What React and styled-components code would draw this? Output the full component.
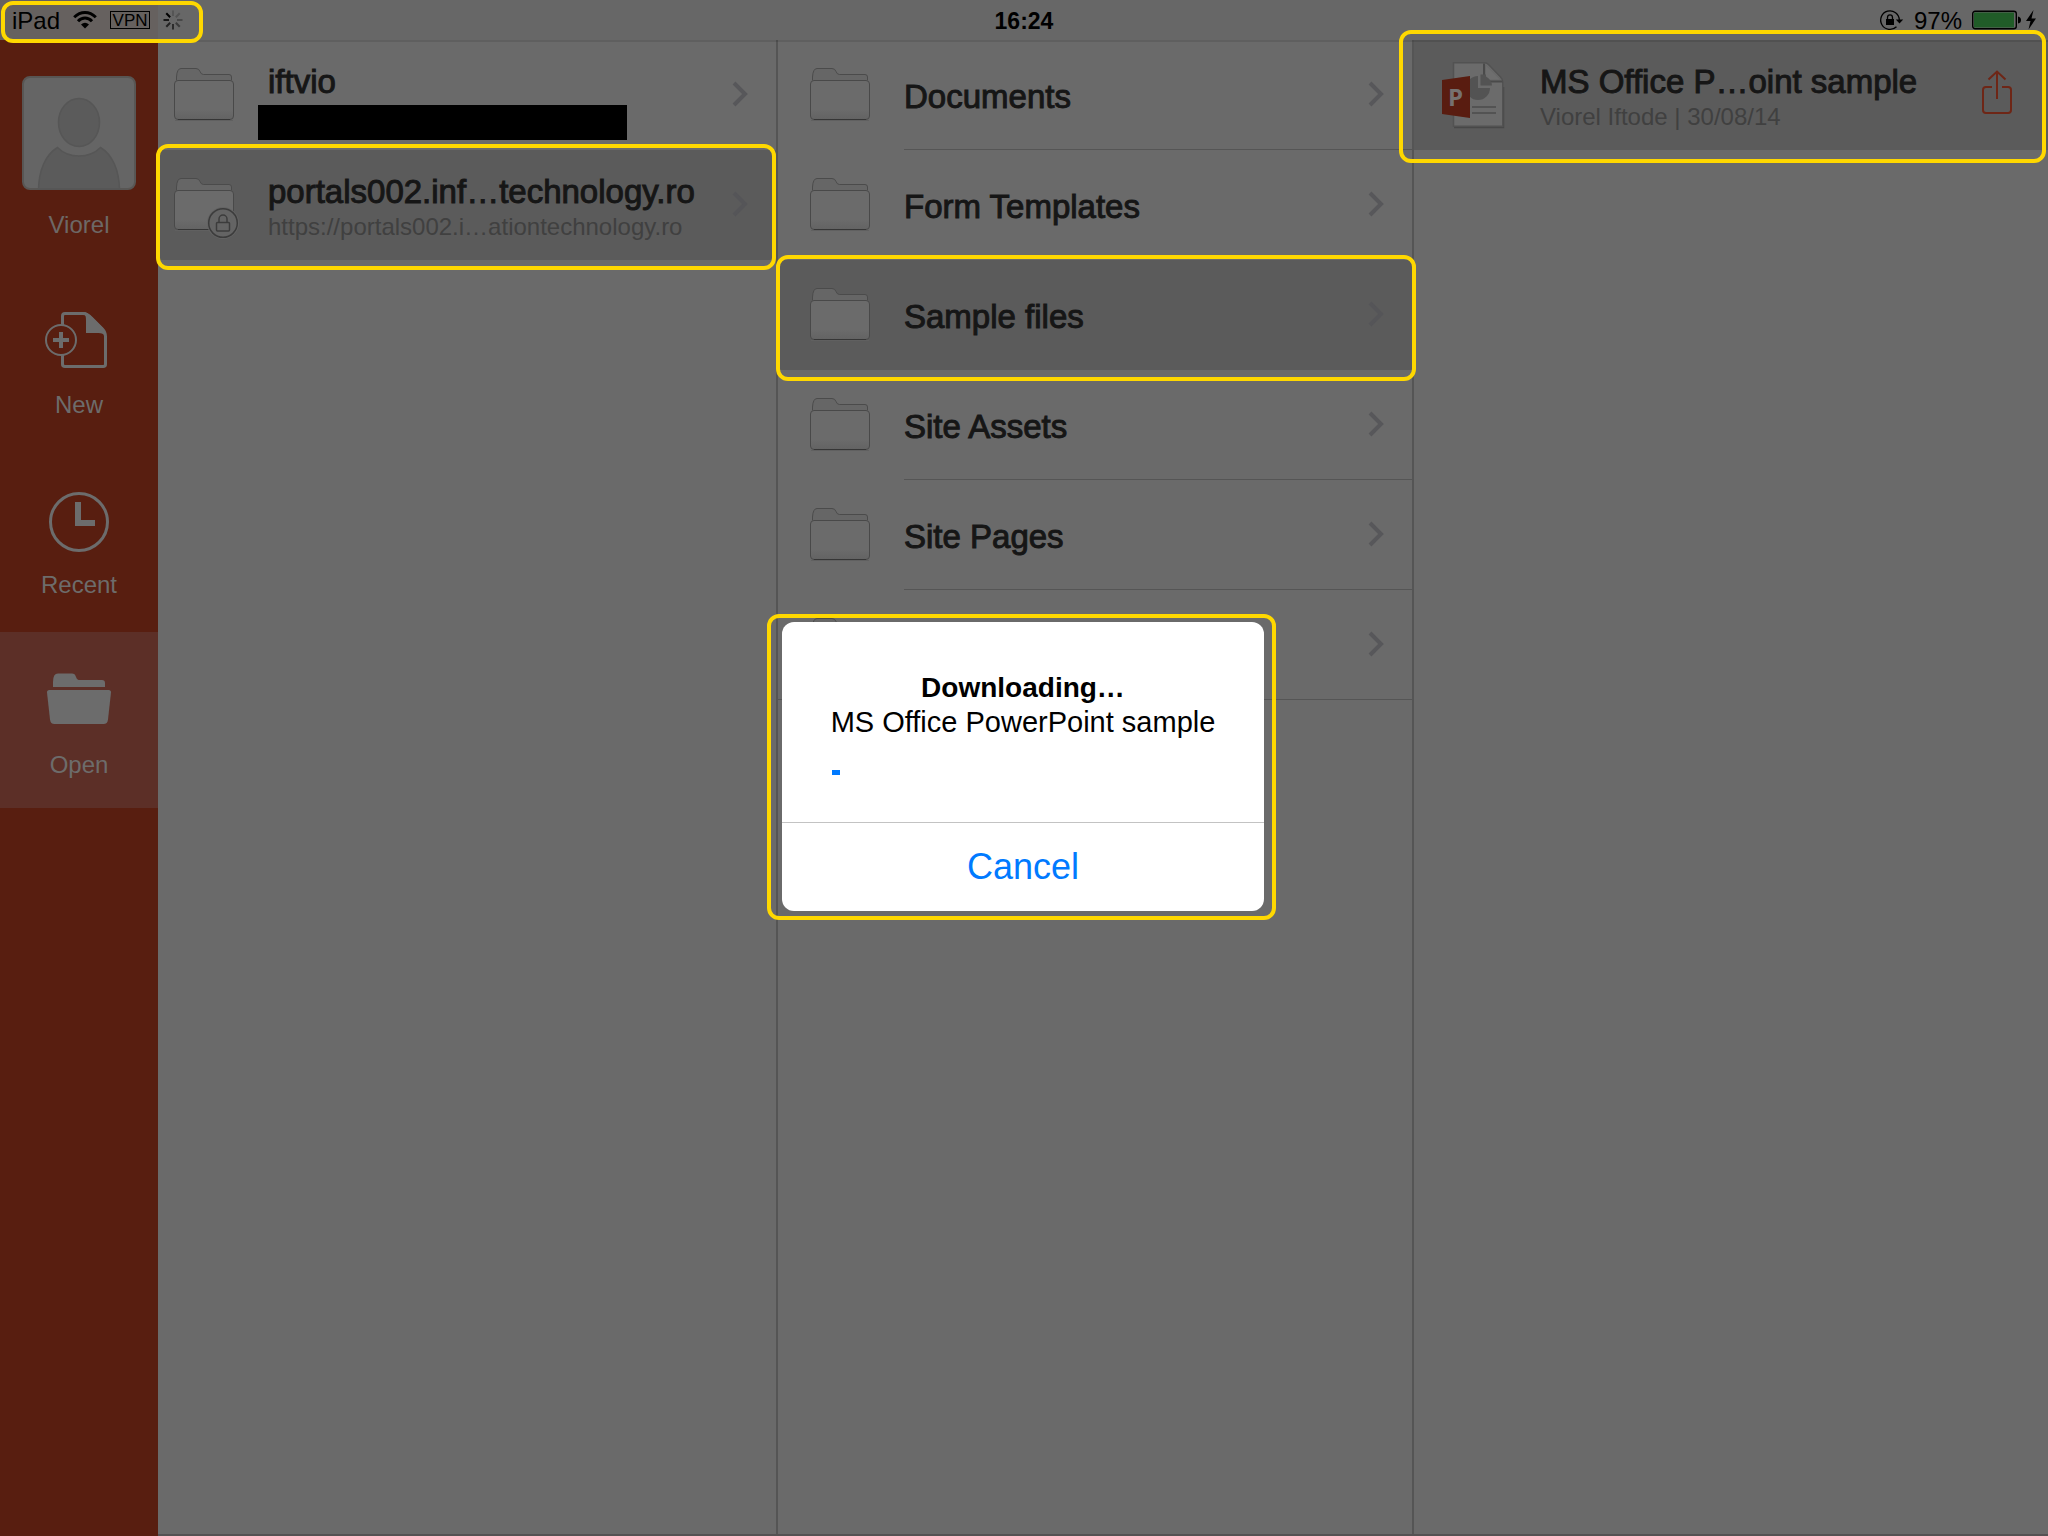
import React from 'react';
import styled, { createGlobalStyle } from 'styled-components';

const GlobalStyle = createGlobalStyle`
  * {
    box-sizing: border-box;
  }

  body {
    margin: 0;
    background: #6a6a6a;
    font-family: "Liberation Sans", Arial, sans-serif;
  }

  button {
    border: 0;
    padding: 0;
    background: none;
    font-family: inherit;
    text-align: left;
    cursor: pointer;
  }

  svg {
    display: block;
    flex: none;
    overflow: visible;
  }
`;

const Page = styled.div`
  display: flex;
  flex-direction: column;
  min-height: 100vh;
`;

/* status bar */

const StatusBar = styled.header`
  position: relative;
  display: grid;
  grid-template-columns: 1fr auto 1fr;
  align-items: center;
  height: 40px;
  padding: 0 12px;
  background: linear-gradient(90deg, #66615f 158px, #676767 158px);
  color: #000;
  font-size: 24px;
  line-height: 28px;
`;

const StatusGroup = styled.div`
  display: flex;
  align-items: center;
  justify-content: ${props => props.$end ? 'flex-end' : 'flex-start'};
  gap: ${props => props.$end ? 10 : 13}px;
`;

const StatusText = styled.span`
  padding-top: 2px;
`;

const Clock = styled.time`
  padding-top: 2px;
  font-size: 23px;
  font-weight: bold;
`;

const Vpn = styled.span`
  width: 40px;
  height: 18px;
  border: 1px solid #000;
  font-size: 17px;
  line-height: 17px;
  text-align: center;
`;

/* yellow frame drawn around the important parts, inset is top right bottom left */
const Highlight = styled.span`
  position: absolute;
  inset: ${props => props.$inset};
  border: 4px solid #ffd800;
  border-radius: 12px;
  pointer-events: none;
  z-index: 3;
`;

/* sidebar */

const Main = styled.div`
  flex: 1;
  display: flex;
`;

const Sidebar = styled.aside`
  flex: none;
  width: 158px;
  padding-top: 36px;
  background: #581e10;
  color: #6d6866;
  font-size: 24px;
  line-height: 28px;
`;

const Profile = styled.div`
  display: flex;
  flex-direction: column;
  align-items: center;
  gap: 21px;
  padding-bottom: 33px;
`;

const Nav = styled.nav`
  display: flex;
  flex-direction: column;
  gap: 4px;
`;

const NavItem = styled.button`
  display: flex;
  flex-direction: column;
  align-items: center;
  gap: 19px;
  height: 176px;
  padding-top: 40px;
  background: ${props => props.$active ? '#5c2f27' : 'transparent'};
  color: #6d6c6b;
  font-size: 24px;
  line-height: 28px;
`;

/* columns */

const Browser = styled.main`
  position: relative;
  flex: 1;
  display: flex;
  border-bottom: 2px solid #555253;

  &::before {
    content: "";
    position: absolute;
    inset: 0 0 auto;
    height: 2px;
    background: rgba(0, 0, 0, 0.1);
    z-index: 1;
  }
`;

const Column = styled.ul`
  flex: ${props => props.$grow} 1 0;
  min-width: 0;
  margin: 0;
  padding: 0;
  list-style: none;

  & + & {
    border-left: 2px solid #555;
  }
`;

const Row = styled.li`
  position: relative;
  display: flex;
  align-items: stretch;
  height: 110px;
  padding-left: ${props => props.$indent}px;
  background: ${props => props.$selected ? '#5b5b5b' : 'transparent'};
  border-bottom: ${props => props.$last ? '1px solid #555' : '0'};
`;

const RowButton = styled.button`
  flex: 1;
  display: flex;
  align-items: center;
  gap: 34px;
  min-width: 0;
`;

const RowBody = styled.span`
  flex: 1;
  display: flex;
  align-items: center;
  align-self: stretch;
  min-width: 0;
  padding-right: ${props => props.$flush ? 0 : 28}px;
  border-bottom: ${props => props.$line ? '1px solid #555' : '0'};
`;

const RowText = styled.span`
  flex: 1;
  display: flex;
  flex-direction: column;
  gap: 2px;
  padding-top: 4px;
`;

/* the stroke gives a medium weight, between regular and bold */
const Title = styled.span`
  min-height: 38px;
  color: #161616;
  font-size: 33px;
  line-height: 38px;
  white-space: nowrap;
  -webkit-text-stroke: 1px #161616;
`;

const Subtitle = styled.span`
  position: relative;
  height: 28px;
  color: #404040;
  font-size: 24px;
  line-height: 28px;
  white-space: nowrap;
`;

const Redacted = styled.span`
  position: absolute;
  top: 2px;
  left: -10px;
  width: 369px;
  height: 35px;
  background: #000;
`;

const ShareButton = styled.button`
  padding: 0 36px;
`;

/* alert */

const Overlay = styled.div`
  position: fixed;
  inset: 0;
  display: flex;
  align-items: center;
  justify-content: center;
  padding: 0 2px 4px 0;
  z-index: 5;
`;

const Alert = styled.div`
  position: relative;
  width: 482px;
  border-radius: 12px;
  background: #fff;
  color: #000;
  line-height: 34px;
`;

const AlertBody = styled.div`
  height: 200px;
  padding: 49px 50px 0;
  text-align: center;
  white-space: nowrap;
`;

const AlertTitle = styled.h2`
  margin: 0;
  font-size: 28px;
  line-height: 34px;
`;

const Message = styled.p`
  display: flex;
  justify-content: center;
  margin: 0;
  font-size: 29px;
`;

const Progress = styled.div`
  height: 5px;
  margin-top: 31px;
`;

const ProgressFill = styled.div`
  height: 5px;
  background: #007aff;
`;

const CancelButton = styled.button`
  width: 100%;
  height: 89px;
  border-top: 1px solid #c3c3c3;
  color: #007aff;
  font-size: 36px;
  line-height: 40px;
  text-align: center;
`;

/* icons */

const WifiIcon = () => (
  <svg width="24" height="18" viewBox="0 0 24 18" fill="none" stroke="#000" strokeWidth="3">
    <path d="M1.2 6.2Q6 1.5 12 1.5T22.800 6.200" />
    <path d="M5 10.200Q8 7 12 7T19 10.200" />
    <path d="M12 17.500L8 13.500Q12 10 16 13.500Z" fill="#000" stroke="none" />
  </svg>
);

const SpinnerIcon = () => {
  const shades = ['#555', '#525252', '#484848', '#3a3a3a', '#2b2b2b', '#222', '#181818', '#000'];
  return (
    <svg width="20" height="20" viewBox="0 0 20 20">
      {shades.map((shade, i) =>
        <line key={shade} x1="10" y1="0.500" x2="10" y2="6" stroke={shade} strokeWidth="2"
          transform={`rotate(${i * 45} 10 10)`} />
      )}
    </svg>
  );
};

const RotationLockIcon = () => (
  <svg width="24" height="20" viewBox="0 0 24 20" fill="none" stroke="#000">
    <path d="M16.500 16.800A9.300 9.300 0 1 1 19.300 10" strokeWidth="1.300" />
    <path d="M15.800 9.500H23.200L19.500 13.500Z" fill="#000" stroke="none" />
    <rect x="6" y="9" width="8" height="6" fill="#000" stroke="none" />
    <path d="M7.500 9.500V7.500a2.500 2.700 0 0 1 5 0V9.500" strokeWidth="1.300" />
  </svg>
);

const BatteryIcon = () => (
  <svg width="64" height="20" viewBox="0 0 64 20">
    <rect x="0.700" y="1.200" width="43.600" height="17.600" rx="2.500" fill="none" stroke="#000" strokeWidth="1.400" />
    <rect x="2" y="2.500" width="40" height="15" fill="#205c28" />
    <path d="M46 6.500q3 0.500 3 3.500t-3 3.500Z" fill="#000" />
    <path d="M61.500 0L54 11H58.500L56.500 19.500L64 8.500H59.500Z" fill="#000" />
  </svg>
);

const AvatarIcon = () => (
  <svg width="114" height="114" viewBox="0 0 114 114" stroke="#565656" strokeWidth="1.500">
    <rect x="1" y="1" width="112" height="112" rx="7" fill="#656565" stroke="#585654" strokeWidth="2" />
    <ellipse cx="57" cy="46.500" rx="20.500" ry="24" fill="#5b5b5b" />
    <path d="M16.500 113C17 95 23 79 35.500 71.500C41 77 48 80 57 80S73 77 78.500 71.500C91 79 97 95 97.500 113Z" fill="#5b5b5b" />
  </svg>
);

const NewIcon = () => (
  <svg width="68" height="60" viewBox="0 0 68 60" fill="none" stroke="#6c6c6c">
    <path d="M17.500 13V4q0-2.500 2.500-2.500H38C42 1.500 44 3.500 47 6.500L57 16.500C59.500 19 60.500 21 60.500 24.500V52.300q0 2.300-2.300 2.300H20q-2.500 0-2.500-2.300V43" strokeWidth="3" />
    <path d="M37 1C41 2.500 41 5 41 9V21H52C57 21 60 22 60.500 26C61 20 59 17 57 15L47 5C44 2 42 0 38 0Z" fill="#6c6c6c" stroke="none" />
    <circle cx="16" cy="28" r="15" strokeWidth="2" />
    <path d="M8 28H24M16 20V36" strokeWidth="4" />
  </svg>
);

const RecentIcon = () => (
  <svg width="68" height="60" viewBox="0 0 68 60">
    <circle cx="34" cy="30" r="28.500" fill="none" stroke="#6c6c6c" strokeWidth="3" />
    <path d="M30 10H36V28H50V34H30Z" fill="#6c6c6c" />
  </svg>
);

const OpenIcon = () => (
  <svg width="68" height="60" viewBox="0 0 68 60" fill="#6c6c6c">
    <path d="M8 15V10Q8 1.600 13 1.600H27Q30 1.600 31 5T34 8H57Q60 8 60 11V15Z" />
    <path d="M4.500 18H63.500Q66.200 18 66 20.500L63 47.500Q62.500 52 58.500 52H9.500Q5.500 52 5 47.500L2 20.500Q1.800 18 4.500 18Z" />
  </svg>
);

const FolderIcon = ({ locked }) => (
  <svg width="60" height="54" viewBox="0 0 60 54">
    <defs>
      <linearGradient id="folder" x1="0" y1="0" x2="0" y2="1">
        <stop offset="0.750" stopColor="#6b6b6b" />
        <stop offset="1" stopColor="#636363" />
      </linearGradient>
    </defs>
    <path d="M2.500 12.500V9Q3 0.500 7 0.500H22Q25 0.500 26 3.500T29.500 6.500H55Q57.500 6.500 57.500 9V12.500" fill="#666" stroke="#4b4b4b" />
    <rect x="1" y="52" width="58" height="1" fill="#606060" />
    <rect x="0.500" y="12.500" width="59" height="39" rx="3.500" fill="url(#folder)" stroke="#494949" />
    <path d="M4 51.500H56" stroke="#363636" />
    {locked &&
      <g fill="none" stroke="#3c3c3c">
        <circle cx="49" cy="45" r="16" fill="#646464" stroke="none" />
        <circle cx="49" cy="45" r="14.300" strokeWidth="1.500" />
        <rect x="42.500" y="44.500" width="13" height="8.500" rx="1" strokeWidth="1.500" />
        <path d="M45 44.500V41a4 4 0 0 1 8 0V44.500" strokeWidth="1.500" />
      </g>
    }
  </svg>
);

const PowerPointIcon = () => (
  <svg width="64" height="66" viewBox="0 0 64 66">
    <path d="M12 65.500H61.500V25" fill="none" stroke="#484848" strokeWidth="1.500" />
    <path d="M11.500 0.800H42.500Q45 0.800 47 3L58.500 15Q60.800 17.500 60.800 20V64.200H11.500Z" fill="#6b6b6b" stroke="#525252" strokeWidth="1.500" />
    <path d="M42 1.500V19.500H60.500" fill="#666" stroke="#4a4a4a" strokeWidth="2" />
    <path d="M44 3.500L58 17.500H44Z" fill="#6e6e6e" />
    <path d="M36 14A12 12 0 1 0 48 26H36Z" fill="#535353" />
    <path d="M38.500 12.500V23.500H50A11.500 11.500 0 0 0 44 14.500V12.500Z" fill="#535353" />
    <path d="M30 45H54M30 51H54" stroke="#535353" strokeWidth="2" />
    <path d="M0 18L28 14V56L0 52Z" fill="#591c10" />
    <text x="6" y="44" fill="#767170" fontFamily="Open Sans, sans-serif" fontWeight="bold" fontSize="24">P</text>
  </svg>
);

const Chevron = ({ dim }) => (
  <svg width="16" height="26" viewBox="0 0 16 26" fill="none" stroke={dim ? '#555558' : '#57575a'} strokeWidth="4">
    <path d="M2 1L13 12L2 23" />
  </svg>
);

const ShareIcon = () => (
  <svg width="30" height="50" viewBox="0 0 30 50" fill="none" stroke="#6e2616" strokeWidth="2">
    <path d="M10 17H4Q1 17 1 20V40Q1 43 4 43H26Q29 43 29 40V20Q29 17 26 17H20" />
    <path d="M15 29V1.500M6.500 9.500L15 1.500L23.500 9.500" />
  </svg>
);

const navItems = [
  { label: 'New', icon: <NewIcon /> },
  { label: 'Recent', icon: <RecentIcon /> },
  { label: 'Open', icon: <OpenIcon />, active: true },
];

const places = [
  { title: 'iftvio', redacted: true },
  {
    title: 'portals002.inf…technology.ro',
    subtitle: 'https://portals002.i…ationtechnology.ro',
    locked: true,
    selected: true,
    frame: '-6px 0 -10px -2px',
  },
];

const folders = [
  { title: 'Documents', line: true },
  { title: 'Form Templates' },
  { title: 'Sample files', selected: true, frame: '-5px -4px -11px -2px' },
  { title: 'Site Assets', line: true },
  { title: 'Site Pages', line: true },
  { title: '', last: true },
];

const FolderRow = ({ item, indent }) => (
  <Row $indent={indent} $selected={item.selected} $last={item.last}>
    <RowButton type="button" aria-label={item.title || 'Folder'}>
      <FolderIcon locked={item.locked} />
      <RowBody $line={item.line}>
        <RowText>
          <Title>{item.title}</Title>
          {item.subtitle && <Subtitle>{item.subtitle}</Subtitle>}
          {item.redacted && <Subtitle><Redacted /></Subtitle>}
        </RowText>
        <Chevron dim={item.selected} />
      </RowBody>
    </RowButton>
    {item.frame && <Highlight $inset={item.frame} />}
  </Row>
);

export default function App() {
  const progress = 2;

  return (
    <Page>
      <GlobalStyle />

      <StatusBar>
        <StatusGroup>
          <StatusText>iPad</StatusText>
          <WifiIcon />
          <Vpn>VPN</Vpn>
          <SpinnerIcon />
        </StatusGroup>
        <Clock>16:24</Clock>
        <StatusGroup $end>
          <RotationLockIcon />
          <StatusText>97%</StatusText>
          <BatteryIcon />
        </StatusGroup>
        <Highlight $inset="1px calc(100% - 203px) -3px 1px" />
      </StatusBar>

      <Main>
        <Sidebar>
          <Profile>
            <AvatarIcon />
            <span>Viorel</span>
          </Profile>
          <Nav>
            {navItems.map(item =>
              <NavItem key={item.label} type="button" $active={item.active}>
                {item.icon}
                <span>{item.label}</span>
              </NavItem>
            )}
          </Nav>
        </Sidebar>

        <Browser>
          <Column $grow={618}>
            {places.map(item => <FolderRow key={item.title} item={item} indent={16} />)}
          </Column>
          <Column $grow={634}>
            {folders.map(item => <FolderRow key={item.title} item={item} indent={32} />)}
          </Column>
          <Column $grow={634}>
            <Row $indent={28} $selected>
              <RowButton type="button">
                <PowerPointIcon />
                <RowBody $flush>
                  <RowText>
                    <Title>MS Office P…oint sample</Title>
                    <Subtitle>Viorel Iftode | 30/08/14</Subtitle>
                  </RowText>
                </RowBody>
              </RowButton>
              <ShareButton type="button" aria-label="Share">
                <ShareIcon />
              </ShareButton>
              <Highlight $inset="-10px 2px -13px -15px" />
            </Row>
          </Column>
        </Browser>
      </Main>

      <Overlay>
        <Alert role="dialog" aria-labelledby="alert-title">
          <AlertBody>
            <AlertTitle id="alert-title">Downloading…</AlertTitle>
            <Message>MS Office PowerPoint sample</Message>
            <Progress role="progressbar" aria-label="Download" aria-valuenow={progress}>
              <ProgressFill style={{ width: `${progress}%` }} />
            </Progress>
          </AlertBody>
          <CancelButton type="button">Cancel</CancelButton>
          <Highlight $inset="-8px -12px -9px -15px" />
        </Alert>
      </Overlay>
    </Page>
  );
}
